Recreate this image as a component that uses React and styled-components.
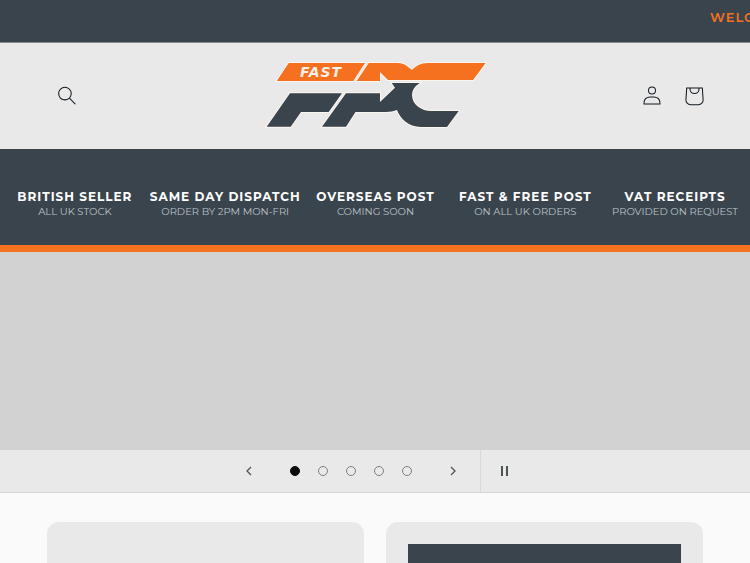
import styled, {createGlobalStyle} from 'styled-components'

const dark = '#3a444d'
const orange = '#f6711f'
const grey = '#e9e9e9'

const GlobalStyle = createGlobalStyle`
  *, *::before {
    box-sizing: border-box;
  }
  body {
    margin: 0;
    overflow-x: hidden;
    background-color: #fafafa;
    font-family: Montserrat, Inter, sans-serif;
  }
`

const Announcement = styled.div`
  overflow: hidden;
  padding: 8px 0px 15px;
  padding-left: calc(100% - 40px);
  border-bottom: 1px solid #858b90;
  background-color: ${dark};
  color: ${orange};
  font-size: 13px;
  font-weight: 600;
  line-height: 19px;
  letter-spacing: 1px;
  white-space: nowrap;
`

const Header = styled.header`
  display: grid;
  grid-template-columns: 1fr auto 1fr;
  align-items: center;
  padding: 18px 34px 20px;
  background-color: ${grey};
`

const HeaderIcons = styled.div`
  display: flex;
  justify-content: flex-end;
`

const IconButton = styled.button`
  display: flex;
  align-items: center;
  justify-content: center;
  width: ${({$width}) => $width || 44}px;
  height: 44px;
  padding: 1px 0px 0px;
  border: 0px;
  background: none;
  color: #121b22;
  cursor: pointer;
`

const SearchButton = styled(IconButton)`
  margin-left: 11px;
`

const LogoLink = styled.a`
  display: block;
  svg {
    display: block;
  }
`

const Benefits = styled.ul`
  display: grid;
  grid-template-columns: repeat(5, 1fr);
  margin: 0px;
  padding: 40px 0px 26px;
  border-bottom: 7px solid ${orange};
  background-color: ${dark};
  list-style: none;
  text-align: center;
  white-space: nowrap;
`

const Benefit = styled.li`
  display: flex;
  flex-direction: column;
  align-items: center;
`

const BenefitTitle = styled.strong`
  color: #fff;
  font-size: 12px;
  font-weight: 700;
  line-height: 16px;
  letter-spacing: 1px;
`

const BenefitText = styled.span`
  color: #bcc2c7;
  font-size: 10px;
  font-weight: 400;
  line-height: 14px;
`

const Slide = styled.div`
  height: 198px;
  background-color: #d2d2d2;
`

const Controls = styled.div`
  display: flex;
  justify-content: center;
  height: 43px;
  padding-left: 3px;
  border-bottom: 1px solid #d5d5d5;
  background-color: ${grey};
`

const Control = styled(IconButton)`
  height: 42px;
  padding: 0px;
  color: #4d5453;
`

const PauseControl = styled(Control)`
  width: 46px;
  margin-left: 5px;
  padding-left: 2px;
  border-left: 1px solid #d9d9d9;
`

const Dots = styled.div`
  display: flex;
  margin: 0px 10px;
`

const Dot = styled(Control)`
  width: 28px;
  &::before {
    content: '';
    width: 10px;
    height: 10px;
    border: 1px solid ${({$active}) => ($active ? '#0c0c0c' : '#7b8280')};
    border-radius: 50%;
    background-color: ${({$active}) => ($active ? '#0c0c0c' : 'transparent')};
  }
`

const Cards = styled.section`
  display: grid;
  grid-template-columns: 1fr 1fr;
  gap: 22px;
  padding: 29px 47px;
`

const Card = styled.div`
  min-height: 320px;
  padding: 22px;
  border-radius: 12px;
  background-color: ${grey};
`

const CardMedia = styled.div`
  height: 274px;
  background-color: ${dark};
`

const Logo = () => (
  <svg width="224" height="68" viewBox="263 61 224 68" role="img" aria-label="Fast FPC">
    <g stroke="#fbf5ef" strokeWidth="2" paintOrder="stroke">
      <g fill={orange}>
        <path d="M288.7 63H365L353.3 81H276.7z" />
        <path d="M368.7 63H398C405 63 408 67 412 70C416 66 420 63 428 63H485.7L473 80H388L380 72V81H356.7z" />
      </g>
      <g fill={dark}>
        <path d="M290 93.3H342L328.7 112H301L290.7 126.7H266.7z" />
        <path d="M346 93.3H380V102L395 87.7L391.7 83H419.7Q412 88 412 95C412 105 422 111 431 111H458.7L447 127H421C408 127 400 118 397 110Q392 112 386 112H355.5L346 126.7H322z" />
      </g>
    </g>
    <text
      x="321"
      y="77"
      textAnchor="middle"
      fill="#f7efe8"
      fontFamily="DejaVu Sans, sans-serif"
      fontSize="14"
      fontWeight="700"
      fontStyle="italic"
      letterSpacing="1"
    >
      FAST
    </text>
  </svg>
)

const SearchIcon = () => (
  <svg width="18" height="19" viewBox="0 0 18 19" fill="currentColor">
    <path
      fillRule="evenodd"
      d="M11.03 11.68A5.784 5.784 0 112.85 3.5a5.784 5.784 0 018.18 8.18zm.26 1.12a6.78 6.78 0 11.72-.7l5.4 5.4a.5.5 0 11-.71.7l-5.41-5.4z"
    />
  </svg>
)

const AccountIcon = () => (
  <svg width="18" height="19" viewBox="0 0 18 19" fill="currentColor">
    <path
      fillRule="evenodd"
      d="M6 4.5a3 3 0 116 0 3 3 0 01-6 0zm3-4a4 4 0 100 8 4 4 0 000-8zm5.58 12.15c1.12.82 1.83 2.24 1.91 4.85H1.51c.08-2.6.79-4.03 1.9-4.85C4.66 11.75 6.5 11.5 9 11.5s4.35.26 5.58 1.15zM9 10.5c-2.5 0-4.65.24-6.17 1.35C1.27 12.98.5 14.93.5 18v.5h17V18c0-3.07-.77-5.02-2.33-6.15-1.52-1.1-3.67-1.35-6.17-1.35z"
    />
  </svg>
)

const CartIcon = () => (
  <svg width="42" height="42" viewBox="0 0 40 40" fill="currentColor">
    <path
      fillRule="evenodd"
      d="M15.75 11.8h-3.16l-.77 11.6a5 5 0 0 0 4.99 5.34h7.38a5 5 0 0 0 4.99-5.33L28.4 11.8zm0 1h-2.22l-.71 10.67a4 4 0 0 0 3.99 4.27h7.38a4 4 0 0 0 4-4.27l-.72-10.67h-2.22v.63a4.75 4.75 0 1 1-9.5 0zm8.5 0h-7.5v.63a3.75 3.75 0 1 0 7.5 0z"
    />
  </svg>
)

const Arrow = ({d}) => (
  <svg width="6" height="10" viewBox="0 0 6 10" fill="none" stroke="currentColor" strokeWidth="1.3">
    <path d={d} />
  </svg>
)

const PauseIcon = () => (
  <svg width="8" height="10" viewBox="0 0 8 10" fill="currentColor">
    <path d="M0 0h2v10H0zM5 0h2v10H5z" />
  </svg>
)

const benefits = [
  {title: 'BRITISH SELLER', text: 'ALL UK STOCK'},
  {title: 'SAME DAY DISPATCH', text: 'ORDER BY 2PM MON-FRI'},
  {title: 'OVERSEAS POST', text: 'COMING SOON'},
  {title: 'FAST & FREE POST', text: 'ON ALL UK ORDERS'},
  {title: 'VAT RECEIPTS', text: 'PROVIDED ON REQUEST'},
]

export default () => (
  <>
    <GlobalStyle />
    <Announcement>WELCOME</Announcement>
    <Header>
      <SearchButton aria-label="Search">
        <SearchIcon />
      </SearchButton>
      <LogoLink href="#">
        <Logo />
      </LogoLink>
      <HeaderIcons>
        <IconButton as="a" href="#" $width={40} aria-label="Log in">
          <AccountIcon />
        </IconButton>
        <IconButton as="a" href="#" aria-label="Cart">
          <CartIcon />
        </IconButton>
      </HeaderIcons>
    </Header>
    <Benefits>
      {benefits.map(({title, text}) => (
        <Benefit key={title}>
          <BenefitTitle>{title}</BenefitTitle>
          <BenefitText>{text}</BenefitText>
        </Benefit>
      ))}
    </Benefits>
    <Slide />
    <Controls>
      <Control aria-label="Previous slide">
        <Arrow d="M5 1L1 5l4 4" />
      </Control>
      <Dots>
        {[1, 2, 3, 4, 5].map(n => (
          <Dot key={n} $active={n === 1} aria-label={`Slide ${n}`} />
        ))}
      </Dots>
      <Control aria-label="Next slide">
        <Arrow d="M1 1l4 4-4 4" />
      </Control>
      <PauseControl aria-label="Pause slideshow">
        <PauseIcon />
      </PauseControl>
    </Controls>
    <Cards>
      <Card />
      <Card>
        <CardMedia />
      </Card>
    </Cards>
  </>
)
